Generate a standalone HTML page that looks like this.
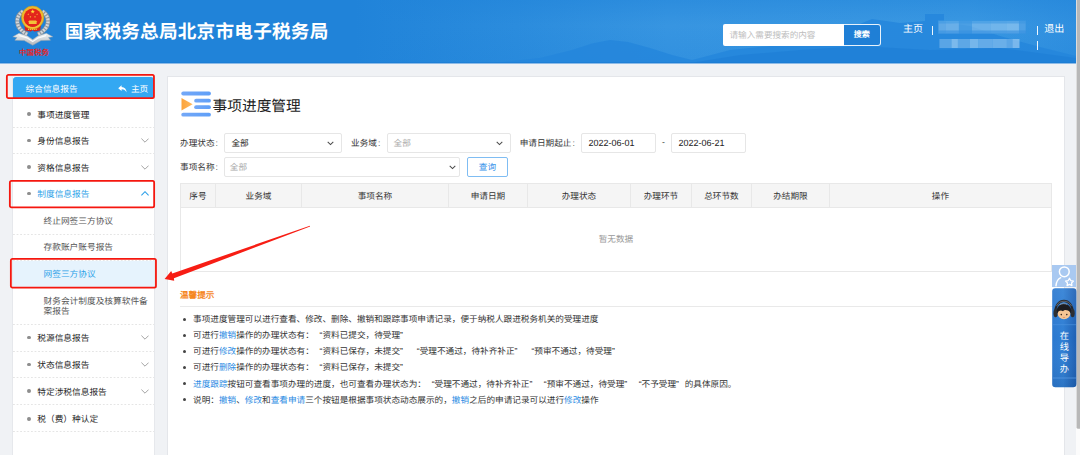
<!DOCTYPE html>
<html lang="zh-CN">
<head>
<meta charset="utf-8">
<title>国家税务总局北京市电子税务局</title>
<style>
*{box-sizing:border-box;margin:0;padding:0}
html,body{width:1080px;height:455px;overflow:hidden}
body{position:relative;background:#f0f2f5;font-family:"Liberation Sans",sans-serif;color:#333;font-size:8.45px;line-height:1;text-rendering:geometricPrecision}
.abs{position:absolute}
/* header */
#hdr{position:absolute;left:0;top:0;width:1076px;height:63px;background:#2083d9;overflow:hidden}
#hdr .bg{position:absolute;left:0;top:0;width:1076px;height:63px}
#title{position:absolute;left:64.6px;top:19px;font-size:18.6px;font-weight:bold;color:transparent;letter-spacing:0.25px;white-space:nowrap;line-height:24px}
#search{position:absolute;left:723px;top:23.5px;width:121px;height:22px;background:#fff;border-radius:2px 0 0 2px;color:#bdbdbd;font-size:8.6px;line-height:22px;padding-left:6.5px;white-space:nowrap}
#sbtn{position:absolute;left:844px;top:23.5px;width:36.6px;height:22px;background:#1f7fd6;border:1px solid #e8f2fb;border-left:none;border-radius:0 3px 3px 0;color:#fff;font-size:8px;font-weight:bold;line-height:20px;text-align:center}
.hl{position:absolute;color:#fff;font-size:10px;line-height:12px;white-space:nowrap}
.pipe{position:absolute;width:1px;height:9px;background:#fff;opacity:.92}
/* sidebar */
#side{position:absolute;left:12px;top:77px;width:143px;height:378px;background:#fff;border-left:1px solid #e6e8ec;border-right:1px solid #e6e8ec}
#shead{position:absolute;left:13px;top:77px;width:141px;height:21px;background:#33a8f2;border-radius:3px 3px 0 0;color:#fff;font-size:8.7px;line-height:24.6px}
.mi{position:absolute;left:13px;width:141px;font-size:8.7px;color:#222;white-space:nowrap;background-image:linear-gradient(90deg,#e5e5e5 55%,rgba(255,255,255,0) 0);background-size:3.6px 1px;background-repeat:repeat-x;background-position:0 100%}
.mi .t{position:absolute;left:24.3px;top:0;line-height:12px}
.mi.sub .t{left:30.5px;color:#555}
.mi .dot{position:absolute;left:13.8px;width:3.8px;height:3.8px;border-radius:50%;background:#8e8e8e}
.mi svg{position:absolute;left:127.6px}
.red{position:absolute;border:1.6px solid #f5201b;border-radius:2.5px}
/* card */
#card{position:absolute;left:167px;top:76px;width:898px;height:390px;background:#fff;border:1px solid #e4e6ea}
.lbl{position:absolute;font-size:8.63px;color:#333;white-space:nowrap;line-height:20px}
.lbl u{text-decoration:none;margin-left:1px}
.sel{position:absolute;height:20px;border:1px solid #e6e6e6;border-radius:2px;background:#fff;font-size:8.63px;line-height:19px;padding-left:6.4px;white-space:nowrap;color:#222}
.sel.ph{color:#aaa}
.sel svg{position:absolute;right:7px;top:6.5px}
#tbl{position:absolute;left:180px;top:183px;width:872px;height:89px;border:1px solid #e8e8e8}
#thead{position:absolute;left:0;top:0;width:870px;height:24px;background:#f5f5f5;border-bottom:1px solid #e8e8e8}
.th{position:absolute;top:0;height:23px;line-height:24px;text-align:center;font-size:8.63px;color:#333;border-right:1px solid #e8e8e8}
.tip li{position:absolute;left:193px;white-space:nowrap;font-size:8.63px;line-height:12px;color:#333;list-style:none}
.tip li:before{content:"";position:absolute;left:-10.2px;top:4.6px;width:3px;height:3px;border-radius:50%;background:#444}
.tip i{font-style:normal;display:inline-block;width:1em}
.tip i.ql{text-align:right}
.tip i.qr{text-align:left}
.tip b{font-weight:normal;color:#2b8be3}
</style>
</head>
<body>
<!-- header -->
<div id="hdr">
<svg class="bg" viewBox="0 0 1076 63" preserveAspectRatio="none">
<defs>
<linearGradient id="g1" x1="0" y1="0" x2="1076" y2="0" gradientUnits="userSpaceOnUse"><stop offset="0" stop-color="#2083d9"/><stop offset="0.33" stop-color="#2083d9"/><stop offset="0.48" stop-color="#2b8cdd"/><stop offset="0.62" stop-color="#3795e1"/><stop offset="0.9" stop-color="#3a98e2"/><stop offset="1" stop-color="#2f8fdf"/></linearGradient>
<linearGradient id="g2" x1="0" y1="0" x2="0" y2="1"><stop offset="0" stop-color="#2083d9" stop-opacity="0.45"/><stop offset="0.4" stop-color="#2083d9" stop-opacity="0"/><stop offset="1" stop-color="#2083d9" stop-opacity="0.25"/></linearGradient>
</defs>
<rect width="1076" height="63" fill="url(#g1)"/>
<rect x="380" width="696" height="63" fill="url(#g2)"/>
<path d="M495 63 L540 58 L572 50 L592 43.5 L610 40 L628 42 L650 48 L672 55 L692 60 L700 58 L730 50 L770 46 L810 40 L845 30 L872 19 L900 23 L925 21 L925 14 L944 14 L944 22 L970 26 L1000 36 L1040 47 L1076 56 L1076 63 Z" fill="#2486dc" opacity="0.85"/>
<path d="M690 63 L740 55 L800 50 L860 46 L930 50 L1000 48 L1076 58 L1076 63 Z" fill="#1f80d7" opacity="0.8"/>
</svg>
<svg class="abs" style="left:8px;top:0" width="52" height="62" viewBox="8 0 52 62">
<defs><linearGradient id="sil" x1="0" y1="0" x2="0" y2="1"><stop offset="0" stop-color="#f4f6f7"/><stop offset="1" stop-color="#aeb4ba"/></linearGradient></defs>
<path d="M23 11.5 C15.2 16 14.2 28 27.5 34.5" fill="none" stroke="#8b949d" stroke-width="4.4"/>
<path d="M42.3 11.5 C50.1 16 51.1 28 37.8 34.5" fill="none" stroke="#8b949d" stroke-width="4.4"/>
<path d="M23 11.5 C15.2 16 14.2 28 27.5 34.5" fill="none" stroke="#d3d7db" stroke-width="3.2" stroke-dasharray="1.9 1.1"/>
<path d="M42.3 11.5 C50.1 16 51.1 28 37.8 34.5" fill="none" stroke="#d3d7db" stroke-width="3.2" stroke-dasharray="1.9 1.1"/>
<path d="M12.8 36.8 L19 33.2 L27.5 36 L32.7 39.6 L37.8 36 L46.3 33.2 L52.8 36.8 L48.5 37.6 L50.5 40.2 L41 40.6 L32.7 45.3 L24.3 40.6 L14.8 40.2 L17 37.6 Z" fill="url(#sil)" stroke="#9da4aa" stroke-width="0.5"/>
<path d="M19.5 35.6 L27 37.8 L32.7 41.6 L38.3 37.8 L46 35.6" fill="none" stroke="#fff" stroke-width="1.2" opacity="0.9"/>
<path d="M24.2 24 L41.1 24 L40.2 30.6 L34.5 31.4 L32.65 30.2 L30.8 31.4 L25.1 30.6 Z" fill="#d9231d"/>
<ellipse cx="32.65" cy="17.6" rx="11.2" ry="11.6" fill="#ecb92c"/>
<ellipse cx="32.65" cy="17.6" rx="11.2" ry="11.6" fill="none" stroke="#c9921a" stroke-width="0.5"/>
<ellipse cx="32.65" cy="17.8" rx="9" ry="9.4" fill="#e3241c"/>
<polygon points="32.70,9.30 33.24,10.86 34.89,10.89 33.57,11.88 34.05,13.46 32.70,12.52 31.35,13.46 31.83,11.88 30.51,10.89 32.16,10.86" fill="#ffd93b"/>
<polygon points="28.30,13.20 28.54,13.88 29.25,13.89 28.68,14.32 28.89,15.01 28.30,14.60 27.71,15.01 27.92,14.32 27.35,13.89 28.06,13.88" fill="#ffd93b"/>
<polygon points="37.10,13.20 37.34,13.88 38.05,13.89 37.48,14.32 37.69,15.01 37.10,14.60 36.51,15.01 36.72,14.32 36.15,13.89 36.86,13.88" fill="#ffd93b"/>
<polygon points="30.40,15.90 30.64,16.58 31.35,16.59 30.78,17.02 30.99,17.71 30.40,17.30 29.81,17.71 30.02,17.02 29.45,16.59 30.16,16.58" fill="#ffd93b"/>
<polygon points="35.00,15.90 35.24,16.58 35.95,16.59 35.38,17.02 35.59,17.71 35.00,17.30 34.41,17.71 34.62,17.02 34.05,16.59 34.76,16.58" fill="#ffd93b"/>
<path d="M29.4 20.4 L36 20.4 L37.4 22 L36.6 22 L36.6 23.9 L28.8 23.9 L28.8 22 L28 22 Z" fill="#f2c23a"/>
<path d="M25.6 24.4 C28 28.6 37.4 28.6 39.8 24.4" fill="none" stroke="#f2c23a" stroke-width="1.3"/>
<path d="M28 29.3 L37.4 29.3" stroke="#f2c23a" stroke-width="1.2" stroke-dasharray="1.2 0.7"/>
<text x="33.9" y="54.6" text-anchor="middle" font-family="Liberation Serif, serif" font-size="7.5" font-weight="bold" fill="#dd2a2f">中国税务</text>
</svg>
<svg class="abs" style="left:0;top:0" width="340" height="63" viewBox="0 0 340 63"><title>国家税务总局北京市电子税务局</title><text x="64.7" y="37.5" font-family="&quot;Liberation Sans&quot;, &quot;Noto Sans CJK SC&quot;, sans-serif" font-size="18.6" font-weight="bold" letter-spacing="0.25" fill="#fff">国家税务总局北京市电子税务局</text></svg>
<div id="title">国家税务总局北京市电子税务局</div>
<div id="search">请输入需要搜索的内容</div>
<div id="sbtn">搜索</div>
<div class="hl" style="left:903px;top:24.3px">主页</div>
<div class="pipe" style="left:932px;top:25.5px"></div>
<svg class="abs" style="left:930px;top:15px;filter:blur(0.6px)" width="100" height="40" viewBox="930 15 100 40">
<g opacity="0.66"><rect x="938.4" y="21" width="7.4" height="12.5" fill="#7db9ec"/><rect x="945.5" y="21" width="13.5" height="12.5" fill="#8cc2ef"/><rect x="958.8" y="21" width="13.5" height="12.5" fill="#55a5e6"/><rect x="972.0" y="21" width="18.6" height="12.5" fill="#86bfee"/><rect x="990.3" y="21" width="16.6" height="12.5" fill="#8fc5f0"/><rect x="1006.6" y="21" width="12.5" height="12.5" fill="#9accf2"/><rect x="1018.9" y="21" width="6.8" height="12.5" fill="#5ba8e7"/><rect x="939.4" y="39" width="12.5" height="9" fill="#74b5eb"/><rect x="951.6" y="39" width="6.4" height="9" fill="#a8d3f4"/><rect x="957.8" y="39" width="12.5" height="9" fill="#7ab8ec"/><rect x="970.0" y="39" width="8.4" height="9" fill="#a0cff3"/><rect x="978.1" y="39" width="14.6" height="9" fill="#84beee"/><rect x="992.4" y="39" width="14.6" height="9" fill="#8ec4f0"/><rect x="1006.6" y="39" width="6.4" height="9" fill="#78b7ec"/><rect x="1012.7" y="39" width="6.8" height="9" fill="#a5d1f4"/></g>
<rect x="938" y="20" width="88" height="3.5" fill="#3a98e2" opacity="0.55"/><rect x="938" y="30.5" width="88" height="3.5" fill="#3590df" opacity="0.6"/>
</svg>
<div class="pipe" style="left:1036.7px;top:25.5px"></div>
<div class="pipe" style="left:1036.7px;top:40.5px"></div>
<div class="hl" style="left:1044.2px;top:24.3px">退出</div>
</div>
<div class="abs" style="left:0;top:61.5px;width:1076px;height:1.5px;background:#1b7bd2;opacity:.6"></div>
<div class="abs" style="left:0;top:63px;width:1076px;height:1px;background:#8dbbe7"></div>
<!-- scrollbar -->
<div class="abs" style="left:1076px;top:0;width:4px;height:455px;background:#fcfcfc"></div>
<svg class="abs" style="left:1076px;top:0" width="4" height="455" viewBox="0 0 4 455"><rect x="0.55" y="-5" width="6" height="433.8" rx="1.6" fill="#b8b8b8"/></svg>

<!-- sidebar -->
<div id="side"></div>
<div id="shead"><span class="abs" style="left:12.5px">综合信息报告</span><span class="abs" style="left:117.9px">主页</span>
<svg class="abs" style="left:104.6px;top:8px" width="9" height="8" viewBox="0 0 9 8"><path d="M3.6 0.3 L0.2 3.2 L3.6 6.1 L3.6 4.3 C5.8 4.2 7.4 5 8.6 7.4 C8.4 4.2 6.6 2.3 3.6 2.1 Z" fill="#fff"/></svg>
</div>
<div id="menu">
<div class="mi" style="top:98px;height:29.5px"><i class="dot" style="top:14.2px"></i><span class="t" style="top:10.5px">事项进度管理</span></div>
<div class="mi" style="top:127.5px;height:26.5px"><i class="dot" style="top:11.1px"></i><span class="t" style="top:7.4px">身份信息报告</span><svg style="top:10.8px" width="8" height="5" viewBox="0 0 8 5"><path d="M0.4 0.6 L4 4.2 L7.6 0.6" fill="none" stroke="#a3a3a3" stroke-width="1"/></svg></div>
<div class="mi" style="top:154px;height:26.5px"><i class="dot" style="top:11.4px"></i><span class="t" style="top:7.7px">资格信息报告</span><svg style="top:11.1px" width="8" height="5" viewBox="0 0 8 5"><path d="M0.4 0.6 L4 4.2 L7.6 0.6" fill="none" stroke="#a3a3a3" stroke-width="1"/></svg></div>
<div class="mi" style="top:180.5px;height:27.0px"><i class="dot" style="top:11.2px"></i><span class="t" style="top:7.5px;color:#2c9fe8">制度信息报告</span><svg style="top:10.9px" width="8" height="5" viewBox="0 0 8 5"><path d="M0.4 4.3 L4 0.7 L7.6 4.3" fill="none" stroke="#2c9fe8" stroke-width="1.05"/></svg></div>
<div class="mi sub" style="top:207.5px;height:27.0px"><span class="t" style="top:7.5px">终止网签三方协议</span></div>
<div class="mi sub" style="top:234.5px;height:26.0px"><span class="t" style="top:6.8px">存款账户账号报告</span></div>
<div class="mi sub" style="top:260.5px;height:26.5px;background:#e6f3fd"><span class="t" style="top:7.6px;color:#2c9fe8">网签三方协议</span></div>
<div class="mi sub" style="top:287px;height:37.5px"><span class="t" style="top:8.6px;line-height:10.4px">财务会计制度及核算软件备<br>案报告</span></div>
<div class="mi" style="top:324.5px;height:27.0px"><i class="dot" style="top:11.2px"></i><span class="t" style="top:7.5px">税源信息报告</span><svg style="top:10.9px" width="8" height="5" viewBox="0 0 8 5"><path d="M0.4 0.6 L4 4.2 L7.6 0.6" fill="none" stroke="#a3a3a3" stroke-width="1"/></svg></div>
<div class="mi" style="top:351.5px;height:26.5px"><i class="dot" style="top:11.0px"></i><span class="t" style="top:7.3px">状态信息报告</span><svg style="top:10.7px" width="8" height="5" viewBox="0 0 8 5"><path d="M0.4 0.6 L4 4.2 L7.6 0.6" fill="none" stroke="#a3a3a3" stroke-width="1"/></svg></div>
<div class="mi" style="top:378px;height:26.5px"><i class="dot" style="top:11.2px"></i><span class="t" style="top:7.5px">特定涉税信息报告</span><svg style="top:10.9px" width="8" height="5" viewBox="0 0 8 5"><path d="M0.4 0.6 L4 4.2 L7.6 0.6" fill="none" stroke="#a3a3a3" stroke-width="1"/></svg></div>
<div class="mi" style="top:404.5px;height:27.0px"><i class="dot" style="top:12.3px"></i><span class="t" style="top:8.6px">税（费）种认定</span></div>
<svg class="abs" style="left:4.3px;top:72.2px" width="152.79999999999998" height="29.0"><rect x="2.85" y="2.85" width="147.10" height="23.30" rx="1.6" fill="none" stroke="#f5170f" stroke-width="1.8"/></svg>
<svg class="abs" style="left:7.199999999999999px;top:177.5px" width="150.0" height="32.19999999999999"><rect x="2.85" y="2.85" width="144.30" height="26.50" rx="1.6" fill="none" stroke="#f5170f" stroke-width="1.8"/></svg>
<svg class="abs" style="left:7.699999999999999px;top:256.4px" width="150.8" height="34.400000000000034"><rect x="2.85" y="2.85" width="145.10" height="28.70" rx="1.6" fill="none" stroke="#f5170f" stroke-width="1.8"/></svg>
</div>

<!-- card -->
<div id="card"></div>
<svg class="abs" style="left:181px;top:91px" width="31" height="27" viewBox="0 0 31 27">
<defs><linearGradient id="ib" x1="0" y1="0" x2="1" y2="0"><stop offset="0" stop-color="#74a8f7"/><stop offset="1" stop-color="#5f9ff8"/></linearGradient>
<linearGradient id="it" x1="0" y1="0" x2="1" y2="0"><stop offset="0" stop-color="#fca43c"/><stop offset="1" stop-color="#ffb85e"/></linearGradient></defs>
<rect x="0.3" y="0.6" width="29.6" height="3.8" rx="1.9" fill="url(#ib)"/>
<rect x="13.2" y="7.8" width="16.7" height="3.8" rx="1.9" fill="url(#ib)"/>
<rect x="13.2" y="14.3" width="16.7" height="3.8" rx="1.9" fill="url(#ib)"/>
<rect x="0.3" y="21.8" width="29.6" height="3.8" rx="1.9" fill="url(#ib)"/>
<path d="M0.5 6.9 L11.6 13.2 L0.5 19.6 Z" fill="url(#it)"/>
</svg>
<div class="abs" style="left:212.6px;top:96.6px;font-size:14.7px;line-height:20px;color:#222;white-space:nowrap">事项进度管理</div>

<div class="lbl" style="left:180px;top:133px">办理状态<u>:</u></div>
<div class="sel" style="left:224px;top:133px;width:118px">全部<svg width="7" height="5" viewBox="0 0 7 5"><path d="M0.7 0.9 L3.5 3.6 L6.3 0.9" fill="none" stroke="#4a4a4a" stroke-width="1.02"/></svg></div>
<div class="lbl" style="left:351px;top:133px">业务域<u>:</u></div>
<div class="sel ph" style="left:387px;top:133px;width:124px;padding-left:5.6px">全部<svg width="7" height="5" viewBox="0 0 7 5"><path d="M0.7 0.9 L3.5 3.6 L6.3 0.9" fill="none" stroke="#4a4a4a" stroke-width="1.02"/></svg></div>
<div class="lbl" style="left:519.7px;top:133px">申请日期起止<u>:</u></div>
<div class="sel" style="left:581px;top:133px;width:75px;font-size:9px">2022-06-01</div>
<div class="lbl" style="left:662px;top:132px">-</div>
<div class="sel" style="left:671px;top:133px;width:75px;font-size:9px">2022-06-21</div>

<div class="lbl" style="left:180px;top:157px">事项名称<u>:</u></div>
<div class="sel ph" style="left:224px;top:157px;width:236px;padding-left:4.8px">全部<svg style="right:3px" width="7" height="5" viewBox="0 0 7 5"><path d="M0.7 0.9 L3.5 3.6 L6.3 0.9" fill="none" stroke="#4a4a4a" stroke-width="1.02"/></svg></div>
<div class="abs" style="left:467px;top:157px;width:41px;height:20px;border:1px solid #7fbdf3;border-radius:2px;color:#3a94ea;font-size:8.63px;line-height:19px;text-align:center">查询</div>

<div id="tbl">
<div id="thead">
<div class="th" style="left:0;width:35px">序号</div>
<div class="th" style="left:35px;width:86px">业务域</div>
<div class="th" style="left:121px;width:147px">事项名称</div>
<div class="th" style="left:268px;width:79px">申请日期</div>
<div class="th" style="left:347px;width:103px">办理状态</div>
<div class="th" style="left:450px;width:61px">办理环节</div>
<div class="th" style="left:511px;width:60px">总环节数</div>
<div class="th" style="left:571px;width:78px">办结期限</div>
<div class="th" style="left:649px;width:221px;border-right:none">操作</div>
</div>
<div class="abs" style="left:0;top:50px;width:870px;text-align:center;font-size:8.63px;color:#999;line-height:10px">暂无数据</div>
</div>

<div class="abs" style="left:180px;top:289px;font-size:8.6px;font-weight:bold;color:#f5871f;line-height:12px;white-space:nowrap">温馨提示</div>
<div class="abs" style="left:180px;top:306px;width:885px;height:1px;background:#e9e9e9"></div>
<ul class="tip">
<li style="top:313px">事项进度管理可以进行查看、修改、删除、撤销和跟踪事项申请记录，便于纳税人跟进税务机关的受理进度</li>
<li style="top:329px">可进行<b>撤销</b>操作的办理状态有：<i class="ql">“</i>资料已提交，待受理<i class="qr">”</i></li>
<li style="top:345px">可进行<b>修改</b>操作的办理状态有：<i class="ql">“</i>资料已保存，未提交<i class="qr">”</i> <i class="ql">“</i>受理不通过，待补齐补正<i class="qr">”</i> <i class="ql">“</i>预审不通过，待受理<i class="qr">”</i></li>
<li style="top:361px">可进行<b>删除</b>操作的办理状态有：<i class="ql">“</i>资料已保存，未提交<i class="qr">”</i></li>
<li style="top:377.5px"><b>进度跟踪</b>按钮可查看事项办理的进度，也可查看办理状态为：<i class="ql">“</i>受理不通过，待补齐补正<i class="qr">”</i><i class="ql">“</i>预审不通过，待受理<i class="qr">”</i><i class="ql">“</i>不予受理<i class="qr">”</i>的具体原因。</li>
<li style="top:393.5px">说明：<b>撤销</b>、<b>修改</b>和<b>查看申请</b>三个按钮是根据事项状态动态展示的，<b>撤销</b>之后的申请记录可以进行<b>修改</b>操作</li>
</ul>

<div class="abs" style="left:1052px;top:265px;width:24.4px;height:21.8px;background:#a9c9f1"></div>
<svg class="abs" style="left:1052px;top:265px" width="25" height="22" viewBox="1052 265 25 22">
<circle cx="1064.3" cy="271.8" r="4.9" fill="none" stroke="#fff" stroke-width="1.45"/>
<path d="M1055.9 286.4 C1056.1 281.6 1058 278.8 1061.2 277.4" fill="none" stroke="#fff" stroke-width="1.45"/>
<polygon points="1069.50,278.20 1070.75,280.58 1073.40,281.03 1071.53,282.96 1071.91,285.62 1069.50,284.43 1067.09,285.62 1067.47,282.96 1065.60,281.03 1068.25,280.58" fill="#a9c9f1" stroke="#fff" stroke-width="1.25" stroke-linejoin="round"/>
</svg>
<svg class="abs" style="left:1052px;top:288px" width="25" height="100" viewBox="1052 288 25 100">
<defs>
<linearGradient id="wg" x1="0" y1="0" x2="1" y2="0"><stop offset="0" stop-color="#2b78cf"/><stop offset="0.45" stop-color="#2f7fd5"/><stop offset="1" stop-color="#1d5fb3"/></linearGradient>
<linearGradient id="wv" x1="0" y1="0" x2="0" y2="1"><stop offset="0" stop-color="#fff" stop-opacity="0.08"/><stop offset="0.5" stop-color="#fff" stop-opacity="0"/><stop offset="1" stop-color="#000" stop-opacity="0.08"/></linearGradient>
</defs>
<path d="M1052.2 291.5 Q1052.2 288.3 1055.4 288.3 L1073.2 288.3 Q1076.4 288.3 1076.4 291.5 L1076.4 384 Q1076.4 387.2 1073.2 387.2 L1055.4 387.2 Q1052.2 387.2 1052.2 384 Z" fill="url(#wg)"/>
<path d="M1052.2 291.5 Q1052.2 288.3 1055.4 288.3 L1073.2 288.3 Q1076.4 288.3 1076.4 291.5 L1076.4 384 Q1076.4 387.2 1073.2 387.2 L1055.4 387.2 Q1052.2 387.2 1052.2 384 Z" fill="url(#wv)"/>
<path d="M1053 324.7 L1076 324.7" stroke="#4f95e2" stroke-width="0.6"/>
<path d="M1053 378 L1076 378" stroke="#5b9ee6" stroke-width="0.7"/>
<!-- avatar -->
<path d="M1055.4 313 C1054.6 296.8 1073.2 296.8 1072.6 313" fill="none" stroke="#26282c" stroke-width="2.2"/><path d="M1056.6 306 C1058.6 299.6 1069.4 299.6 1071.4 306" fill="none" stroke="#7b8087" stroke-width="0.7"/>
<ellipse cx="1055.6" cy="313.2" rx="2.1" ry="4.1" fill="#2d2f33"/>
<ellipse cx="1072.6" cy="313.2" rx="2.1" ry="4.1" fill="#2d2f33"/>
<ellipse cx="1064" cy="310.3" rx="7.2" ry="6.6" fill="#1d1d20"/>
<ellipse cx="1064" cy="313.8" rx="6.3" ry="5.4" fill="#f5c594"/>
<path d="M1057.4 312.4 C1058.5 307 1068 305.5 1070.6 312.4 C1068 310 1064.5 309.3 1063 311.2 C1061 309.8 1058.8 310.6 1057.4 312.4 Z" fill="#1d1d20"/>
<path d="M1060 304.6 C1062 303.4 1065 303.4 1067 304.4" fill="none" stroke="#8e949c" stroke-width="0.8"/>
<circle cx="1061.3" cy="314.6" r="0.8" fill="#3a2a20"/>
<circle cx="1066.8" cy="314.6" r="0.8" fill="#3a2a20"/>
<path d="M1062.8 317.2 Q1064 318 1065.2 317.2" fill="none" stroke="#c46a4a" stroke-width="0.5"/>
</svg>
<div class="abs" style="left:1052.2px;top:330.6px;width:24.2px;text-align:center;color:#fff;font-size:9.2px;line-height:11px">在<br>线<br>导<br>办</div>
<svg class="abs" style="left:160px;top:220px" width="160" height="70" viewBox="160 220 160 70">
<path d="M309.9 225.7 L172.3 273.5 L171.2 271 L164.6 278.9 L174.2 280.8 L173.9 278.2 L310.1 226.6 Z" fill="#f71d14"/>
</svg>
</body>
</html>
